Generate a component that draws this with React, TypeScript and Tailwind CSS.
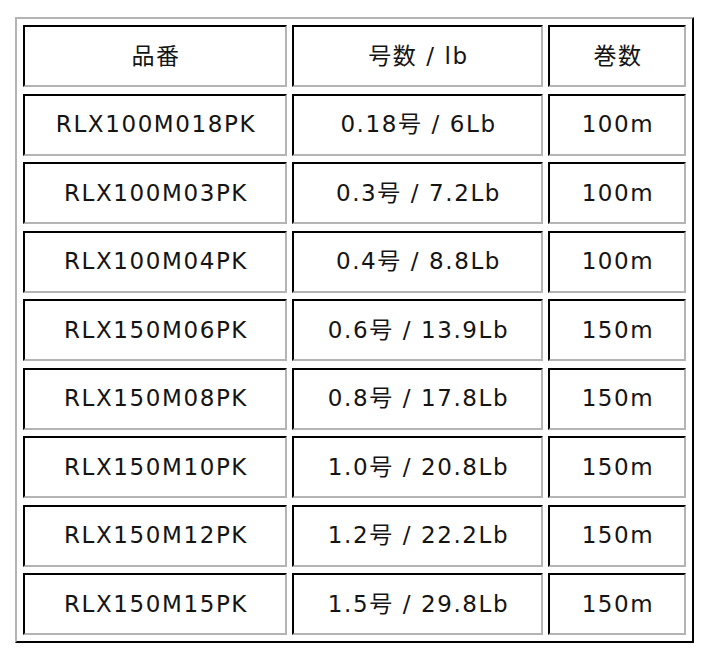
import { Fragment } from "react";

const rows = [
  ["RLX100M018PK", "0.18号 / 6Lb", "100m"],
  ["RLX100M03PK", "0.3号 / 7.2Lb", "100m"],
  ["RLX100M04PK", "0.4号 / 8.8Lb", "100m"],
  ["RLX150M06PK", "0.6号 / 13.9Lb", "150m"],
  ["RLX150M08PK", "0.8号 / 17.8Lb", "150m"],
  ["RLX150M10PK", "1.0号 / 20.8Lb", "150m"],
  ["RLX150M12PK", "1.2号 / 22.2Lb", "150m"],
  ["RLX150M15PK", "1.5号 / 29.8Lb", "150m"],
];

const Cell = ({ children }: { children: React.ReactNode }) => (
  <div className="flex items-center justify-center border-2 border-t-black border-l-black border-b-[#b4b4b4] border-r-[#b4b4b4] bg-white pl-[2px]">
    {children}
  </div>
);

const App = () => {
  return (
    <div className="min-h-[663px] w-[720px] bg-white pt-[17px] pl-[15px] text-[#141414] font-['DejaVu_Sans','Noto_Sans_CJK_JP',sans-serif] text-[23px] tracking-[1.6px]">
      <div className="inline-grid grid-cols-[264px_251px_138px] auto-rows-[62px] gap-x-[5px] gap-y-[6.5px] p-[6px] border-2 border-t-[#b4b4b4] border-l-[#b4b4b4] border-b-black border-r-black">
        <Cell>品番</Cell>
        <Cell>号数 / lb</Cell>
        <Cell>巻数</Cell>
        {rows.map((r) => (
          <Fragment key={r[0]}>
            <Cell>{r[0]}</Cell>
            <Cell>{r[1]}</Cell>
            <Cell>{r[2]}</Cell>
          </Fragment>
        ))}
      </div>
    </div>
  );
};

export default App;
